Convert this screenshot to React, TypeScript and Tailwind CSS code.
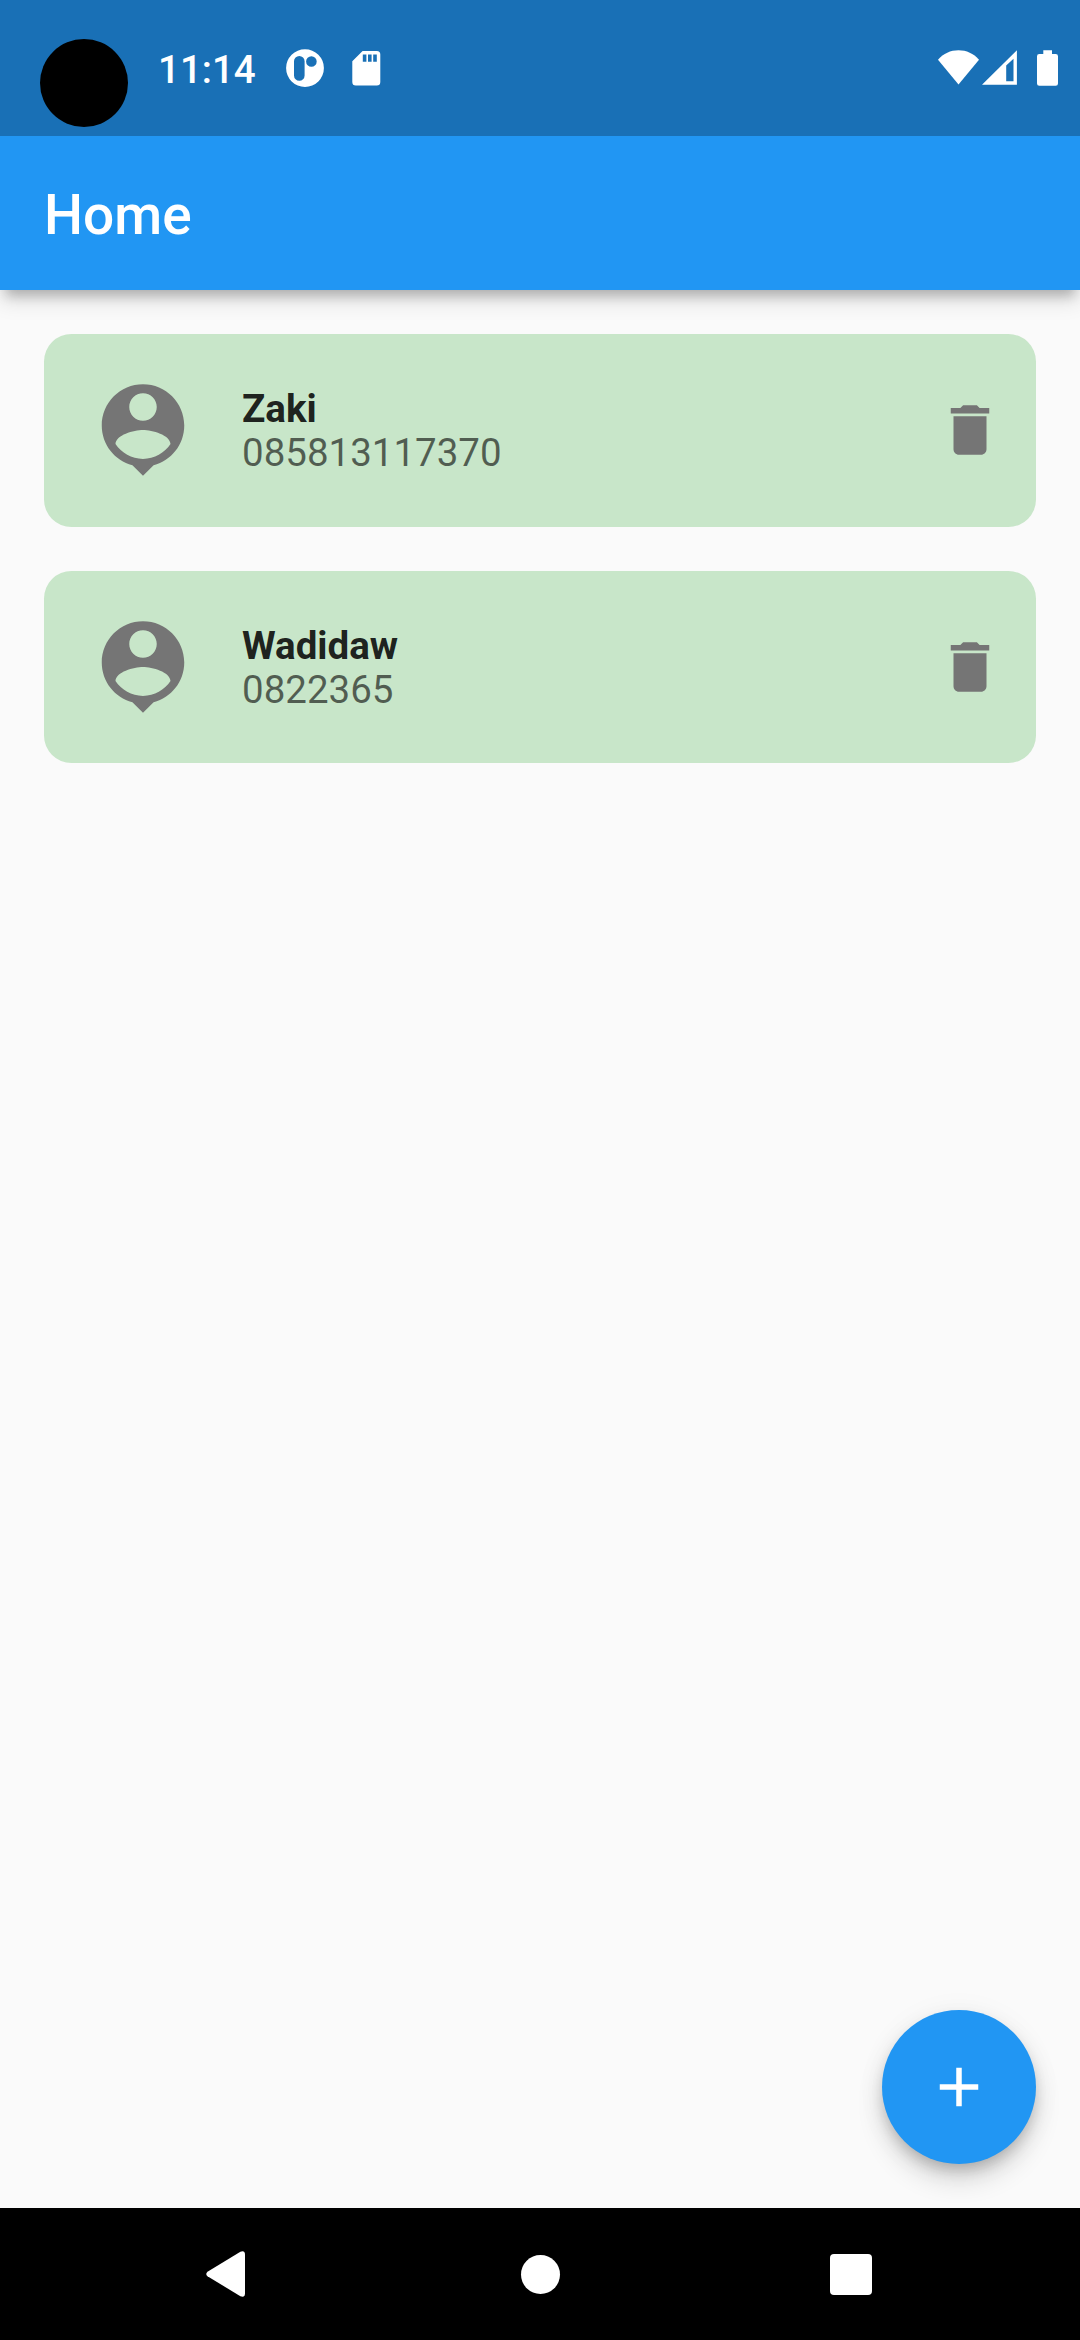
import React from "react";
import { MdAdd, MdDelete } from "react-icons/md";

type Contact = { name: string; phone: string };

const contacts: Contact[] = [
  { name: "Zaki", phone: "085813117370" },
  { name: "Wadidaw", phone: "0822365" },
];

function StatusBar() {
  return (
    <div className="relative z-20 flex h-[136px] shrink-0 items-start bg-[#1970b6] text-white">
      <div className="ml-[40px] mt-[39px] size-[88px] shrink-0 rounded-full bg-black" />
      <span className="ml-[30px] mt-[47px] w-[98px] whitespace-nowrap text-[38.5px] font-medium leading-[46px]">11:14</span>
      <svg className="ml-[30px] mt-[49px]" width="38" height="38" viewBox="0 0 38 38" fill="white">
        <path
          fillRule="evenodd"
          d="M19 .2a18.9 18.9 0 1 1 0 37.8a18.9 18.9 0 1 1 0-37.8zM13.3 7A5.3 5.3 0 0 0 8 12.3v14.1a5.3 5.3 0 0 0 10.6 0V12.3A5.3 5.3 0 0 0 13.3 7zM25.4 7.2a5.3 5.3 0 1 0 0 10.6a5.3 5.3 0 1 0 0-10.6z"
        />
      </svg>
      <svg className="ml-[28px] mt-[51px]" width="29" height="35" viewBox="0 0 29 35" fill="white">
        <path
          fillRule="evenodd"
          d="M10.6 0H24.8a3.5 3.5 0 0 1 3.5 3.5V31a3.5 3.5 0 0 1-3.5 3.5H3.8A3.5 3.5 0 0 1 .3 31V10.3zM10.8 3.5v7.2h3.6V3.5zM16 3.5v7.2h3.6V3.5zM21.2 3.5v7.2h3.6V3.5z"
        />
      </svg>
      <svg className="ml-auto mt-[50px]" width="42" height="35" viewBox="0 0 42 35" fill="white">
        <path d="M20.5 34.5L0 9.7C5.5 3.6 12.5 .3 20.5 .3S35.500 3.600 41 9.700z" />
      </svg>
      <svg className="ml-[2px] mt-[50px]" width="35" height="35" viewBox="0 0 35 35" fill="white">
        <path fillRule="evenodd" d="M0 34.700L34.900 .3V34.700zM24.200 15.500V31.200H31.500V8.700z" />
      </svg>
      <svg className="ml-[20px] mr-[22px] mt-[50px]" width="21" height="36" viewBox="0 0 21 36" fill="white">
        <path d="M6.300 .3h8.700V4h3.700A2.300 2.300 0 0 1 21 6.300V33.400a2.300 2.300 0 0 1-2.300 2.300H2.300A2.300 2.300 0 0 1 0 33.400V6.300A2.300 2.300 0 0 1 2.300 4h4z" />
      </svg>
    </div>
  );
}

function PersonPin() {
  return (
    <svg className="size-[110px] shrink-0 text-[#757575]" viewBox="0 0 24 24" fill="currentColor">
      <path d="M12 2c-4.970 0-9 4.030-9 9 0 4.170 2.840 7.670 6.690 8.690L12 22l2.310-2.310C18.160 18.670 21 15.170 21 11c0-4.970-4.030-9-9-9zm0 2c1.660 0 3 1.340 3 3s-1.340 3-3 3-3-1.340-3-3 1.340-3 3-3zm0 14.300c-2.500 0-4.710-1.280-6-3.220.03-1.990 4-3.080 6-3.080 1.990 0 5.970 1.090 6 3.080-1.290 1.940-3.500 3.220-6 3.220z" />
    </svg>
  );
}

function ContactCard({ name, phone }: Contact) {
  return (
    <li className="flex h-[192.5px] items-center rounded-[27.5px] bg-[#c8e6c9] pl-[44px] pr-[33px]">
      <PersonPin />
      <div className="ml-[44px] mt-[2px] flex-1 text-[38.5px] leading-[44px]">
        <p className="font-bold text-black/87">{name}</p>
        <p className="text-black/60">{phone}</p>
      </div>
      <button aria-label={`Delete ${name}`}>
        <MdDelete className="size-[66px] text-[#757575]" />
      </button>
    </li>
  );
}

function NavigationBar() {
  return (
    <nav className="flex h-[132px] shrink-0 items-center bg-black pl-[206px]">
      <svg width="39" height="46" viewBox="0 0 39 46" fill="white">
        <path d="M1.500 20.700L34.400 .8Q38.800-.9 39 3.500V42.500Q38.800 46.900 34.400 45.200L1.500 25.300Q-1 23 1.500 20.700z" />
      </svg>
      <div className="ml-[276px] mt-px size-[39px] rounded-full bg-white" />
      <div className="ml-[270px] mt-px size-[41.5px] rounded-[4px] bg-white" />
    </nav>
  );
}

export default function App() {
  return (
    <div className="flex h-[2340px] w-[1080px] flex-col overflow-hidden bg-[#fafafa] font-['Roboto',sans-serif]">
      <StatusBar />
      <header className="relative z-10 flex h-[154px] shrink-0 items-center bg-[#2196f3] pl-[44px] pt-[4px] shadow-[0_11px_11px_-5.5px_rgba(0,0,0,0.22),0_11px_20px_0_rgba(0,0,0,0.12)]">
        <h1 className="text-[55px] font-medium leading-[64px] text-white">Home</h1>
      </header>
      <main className="flex flex-1 flex-col p-[44px]">
        <ul className="flex flex-col gap-[44px]">
          {contacts.map((c) => (
            <ContactCard key={c.name} {...c} />
          ))}
        </ul>
        <button
          aria-label="Add contact"
          className="mt-auto flex size-[154px] items-center justify-center self-end rounded-full bg-[#2196f3] text-white shadow-[0_8px_14px_-3px_rgba(0,0,0,0.2),0_16px_27px_0_rgba(0,0,0,0.14),0_3px_30px_0_rgba(0,0,0,0.05)]"
        >
          <MdAdd className="size-[66px]" />
        </button>
      </main>
      <NavigationBar />
    </div>
  );
}
